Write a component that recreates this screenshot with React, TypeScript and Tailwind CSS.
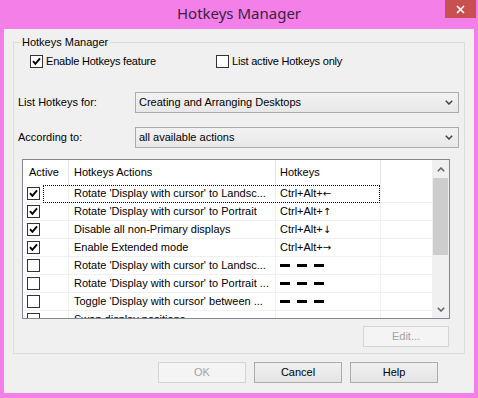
import React from "react";

const F = { fontFamily: '"Liberation Sans", Arial, sans-serif' };

function Check({ checked }: { checked: boolean }) {
  return (
    <span className="flex h-[13px] w-[13px] shrink-0 items-center justify-center border border-[#333333] bg-white">
      {checked && (
        <svg width="9" height="9" viewBox="0 0 9 9">
          <path d="M1 4.2 L3.4 6.8 L8 1.4" stroke="#000" strokeWidth="1.9" fill="none" />
        </svg>
      )}
    </span>
  );
}

function Chevron({ up = false, color = "#444" }: { up?: boolean; color?: string }) {
  return (
    <svg width="8" height="5" viewBox="0 0 8 5">
      <path d={up ? "M0.8 4.2 L4 1 L7.2 4.2" : "M0.8 0.8 L4 4 L7.2 0.8"} stroke={color} strokeWidth="1.5" fill="none" />
    </svg>
  );
}

function Dashes() {
  return (
    <span className="flex items-center gap-[7px]">
      <span className="h-[3px] w-[10px] bg-black" />
      <span className="h-[3px] w-[10px] bg-black" />
      <span className="h-[3px] w-[10px] bg-black" />
    </span>
  );
}

const rows: { c: boolean; a: string; k: string | null }[] = [
  { c: true, a: "Rotate 'Display with cursor' to Landsc...", k: "\u2190" },
  { c: true, a: "Rotate 'Display with cursor' to Portrait", k: "\u2191" },
  { c: true, a: "Disable all non-Primary displays", k: "\u2193" },
  { c: true, a: "Enable Extended mode", k: "\u2192" },
  { c: false, a: "Rotate 'Display with cursor' to Landsc...", k: null },
  { c: false, a: "Rotate 'Display with cursor' to Portrait ...", k: null },
  { c: false, a: "Toggle 'Display with cursor' between ...", k: null },
  { c: false, a: "Swap display positions", k: null },
];

function Combo({ text }: { text: string }) {
  return (
    <div className="flex h-[21px] flex-1 items-center justify-between border border-[#acacac] bg-gradient-to-b from-[#f2f2f2] to-[#e8e8e8] pl-[3px] pr-[5px] text-black">
      <span>{text}</span>
      <Chevron />
    </div>
  );
}

function Btn({ label, disabled = false, w = "w-[88px]" }: { label: string; disabled?: boolean; w?: string }) {
  return (
    <div
      className={
        "flex h-[21px] items-center justify-center border " +
        w +
        " " +
        (disabled
          ? "border-[#d5d5d5] bg-[#f4f4f4] text-[#a3a3a3]"
          : "border-[#acacac] bg-gradient-to-b from-[#f0f0f0] to-[#e5e5e5] text-black")
      }
    >
      {label}
    </div>
  );
}

export default function App() {
  return (
    <div className="flex h-[398px] w-[478px] flex-col bg-[#f47fe8] text-[11px]" style={F}>
      {/* title bar */}
      <div className="flex h-[29px] shrink-0 items-start px-[2px]">
        <div className="w-[31px]" />
        <div
          className="flex-1 pt-[4px] text-center text-[15px] leading-[18px] text-[#3a1f40]"
          style={{ fontFamily: '"Noto Sans", "Open Sans", sans-serif' }}
        >
          Hotkeys Manager
        </div>
        <div className="flex h-[18px] w-[31px] items-center justify-center bg-[#c75050]">
          <svg width="9" height="9" viewBox="0 0 9 9">
            <path d="M1 1 L8 8 M8 1 L1 8" stroke="#fff" strokeWidth="1.6" />
          </svg>
        </div>
      </div>

      {/* client */}
      <div className="mx-[4px] flex flex-1 flex-col bg-[#f0f0f0] px-[9px]">
        <fieldset className="mt-[7px] border border-[#dcdcdc] pb-[6px]">
          <legend className="ml-[6px] h-[13px] px-[2px] leading-[13px] text-black">Hotkeys Manager</legend>

          <div className="mt-[6px] flex h-[13px] items-center pl-[16px] text-black">
            <div className="flex w-[186px] items-center gap-[3px]">
              <Check checked />
              <span className="tracking-[-0.2px]">Enable Hotkeys feature</span>
            </div>
            <div className="flex items-center gap-[3px]">
              <Check checked={false} />
              <span className="tracking-[-0.2px]">List active Hotkeys only</span>
            </div>
          </div>

          <div className="mt-[24px] flex items-center pl-[4px] pr-[5px] text-black">
            <span className="w-[117px]">List Hotkeys for:</span>
            <Combo text="Creating and Arranging Desktops" />
          </div>

          <div className="mt-[14px] flex items-center pl-[4px] pr-[5px] text-black">
            <span className="w-[117px]">According to:</span>
            <Combo text="all available actions" />
          </div>

          {/* list view */}
          <div className="ml-[8px] mt-[11px] flex h-[160px] w-[428px] overflow-hidden border border-[#828790] bg-white text-black">
            <div className="flex flex-1 flex-col overflow-hidden">
              <div className="grid h-[25px] shrink-0 grid-cols-[46px_207px_105px_1fr] items-center">
                <div className="flex h-full items-center border-r border-[#e5e5e5] pl-[6px]">Active</div>
                <div className="flex h-full items-center border-r border-[#e5e5e5] pl-[5px]">Hotkeys Actions</div>
                <div className="flex h-full items-center border-r border-[#e5e5e5] pl-[4px]">Hotkeys</div>
                <div />
              </div>
              {rows.map((r, i) => (
                <div
                  key={i}
                  className="relative grid h-[18px] shrink-0 grid-cols-[46px_207px_105px_1fr] border-b border-[#f0f0f0]"
                >
                  <div className="flex h-full items-center border-r border-[#f0f0f0] pl-[4px]">
                    <Check checked={r.c} />
                  </div>
                  <div className="flex h-full items-center whitespace-nowrap border-r border-[#f0f0f0] pl-[5px]">
                    {r.a}
                  </div>
                  <div className="flex h-full items-center border-r border-[#f0f0f0] pl-[4px]">
                    {r.k ? (
                      <span>
                        Ctrl+Alt+
                        <span style={{ fontFamily: '"DejaVu Sans", sans-serif' }} className="text-[10px]">
                          {r.k}
                        </span>
                      </span>
                    ) : (
                      <Dashes />
                    )}
                  </div>
                  <div />
                  {i === 0 && (
                    <div className="pointer-events-none absolute left-[20px] top-0 h-[18px] w-[337px] border border-dotted border-black" />
                  )}
                </div>
              ))}
            </div>
            <div className="flex w-[17px] shrink-0 flex-col bg-[#f0f0f0]">
              <div className="flex h-[18px] items-center justify-center">
                <Chevron up color="#606060" />
              </div>
              <div className="mx-[1px] h-[77px] bg-[#cdcdcd]" />
              <div className="flex-1" />
              <div className="flex h-[18px] items-center justify-center">
                <Chevron color="#606060" />
              </div>
            </div>
          </div>

          <div className="mt-[7px] flex justify-end pr-[15px]">
            <Btn label="Edit..." disabled w="w-[86px]" />
          </div>
        </fieldset>

        <div className="mt-[8px] flex justify-end gap-[8px] pr-[27px]">
          <Btn label="OK" disabled />
          <Btn label="Cancel" />
          <Btn label="Help" />
        </div>
      </div>
      <div className="h-[5px] shrink-0" />
    </div>
  );
}
